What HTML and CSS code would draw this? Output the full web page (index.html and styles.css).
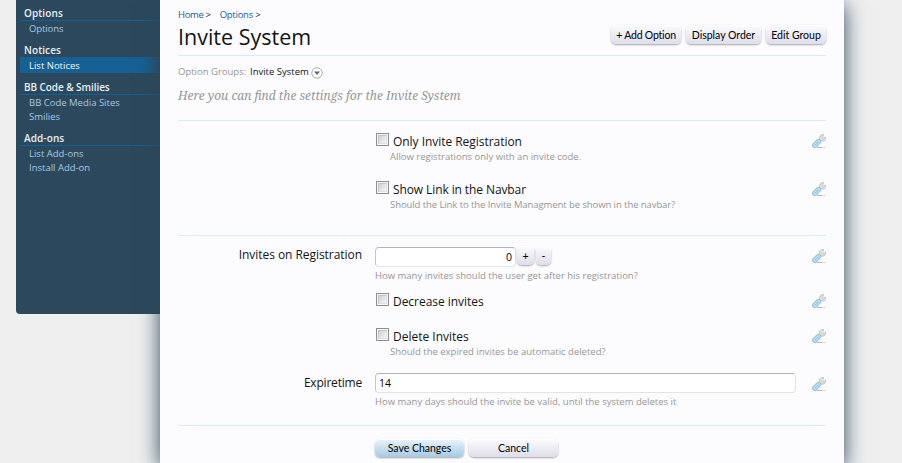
FILE: index.html
```html
<!DOCTYPE html>
<html lang="en">
<head>
<meta charset="utf-8">
<title>Invite System</title>
<link rel="stylesheet" href="styles.css">
</head>
<body>
<svg class="defs" width="0" height="0" aria-hidden="true">
  <defs>
    <symbol id="wrench" viewBox="0 0 14 14">
      <path d="M5 13h5v1H5z" fill="#bbb"/>
      <path d="M10 13h4v1h-4z" fill="#ddd"/>
      <path d="M7.500 6.500V3L9 1l2-.6L12 1l-1.500 2 1.300 1.200L13.600 3l.1 2.500L12 7H9L8 8z" fill="#dededf" stroke="#bcbcbf" stroke-width=".8"/>
      <path d="M2.800 11.200L6.500 7.600" stroke="#8fbdd6" stroke-width="5.400" stroke-linecap="round"/>
      <path d="M2.800 11.200L6.500 7.600" stroke="#b9dff1" stroke-width="3.600" stroke-linecap="round"/>
      <path d="M3 11.200L6.500 7.700" stroke="#86b8d2" stroke-width=".8"/>
    </symbol>
  </defs>
</svg>
<div class="page">
  <nav class="sidebar">
    <section class="group">
      <h2>Options</h2>
      <a class="t-opt">Options</a>
    </section>
    <section class="group">
      <h2>Notices</h2>
      <a class="active">List Notices</a>
    </section>
    <section class="group">
      <h2 class="t-bb">BB Code &amp; Smilies</h2>
      <a>BB Code Media Sites</a>
      <a>Smilies</a>
    </section>
    <section class="group">
      <h2>Add-ons</h2>
      <a>List Add-ons</a>
      <a>Install Add-on</a>
    </section>
  </nav>
  <main class="content">
    <div class="crumbs"><span><a>Home</a> &gt;</span><span><a>Options</a> &gt;</span></div>
    <header class="titlebar">
      <h1>Invite System</h1>
      <div class="actions">
        <button class="btn b-add">+ Add Option</button>
        <button class="btn b-order">Display Order</button>
        <button class="btn b-edit">Edit Group</button>
      </div>
    </header>
    <div class="groups"><span class="muted">Option Groups:</span><span class="current">Invite System</span>
      <svg width="12" height="12" viewBox="0 0 12 12"><circle cx="6" cy="6" r="5.200" fill="#fff" stroke="#aaa"/><path d="M3 4.500h6L6 8z" fill="#666"/></svg>
    </div>
    <p class="intro">Here you can find the settings for the Invite System</p>
    <form>
      <div class="row r-only">
        <div class="name"></div>
        <div class="field"><label class="check"><i></i><span class="l-only">Only Invite Registration</span></label><p class="hint indent h-only">Allow registrations only with an invite code.</p></div>
        <svg class="tool"><use href="#wrench"/></svg>
      </div>
      <div class="row r-show">
        <div class="name"></div>
        <div class="field"><label class="check"><i></i><span class="l-show">Show Link in the Navbar</span></label><p class="hint indent h-show">Should the Link to the Invite Managment be shown in the navbar?</p></div>
        <svg class="tool"><use href="#wrench"/></svg>
      </div>
      <div class="row r-count">
        <div class="name n-inv">Invites on Registration</div>
        <div class="field"><div class="spin"><div class="input number">0</div><button type="button" class="btn step">+</button><button type="button" class="btn step">-</button></div><p class="hint h-count">How many invites should the user get after his registration?</p></div>
        <svg class="tool"><use href="#wrench"/></svg>
      </div>
      <div class="row r-dec">
        <div class="name"></div>
        <div class="field"><label class="check"><i></i><span class="l-dec">Decrease invites</span></label></div>
        <svg class="tool"><use href="#wrench"/></svg>
      </div>
      <div class="row r-del">
        <div class="name"></div>
        <div class="field"><label class="check"><i></i><span class="l-del">Delete Invites</span></label><p class="hint indent h-del">Should the expired invites be automatic deleted?</p></div>
        <svg class="tool"><use href="#wrench"/></svg>
      </div>
      <div class="row r-exp">
        <div class="name n-exp">Expiretime</div>
        <div class="field"><div class="input">14</div><p class="hint h-exp">How many days should the invite be valid, until the system deletes it</p></div>
        <svg class="tool"><use href="#wrench"/></svg>
      </div>
      <div class="submit"><button type="button" class="btn primary">Save Changes</button><button type="button" class="btn">Cancel</button></div>
    </form>
  </main>
</div>
</body>
</html>
```

FILE: styles.css
```css
*, ::before { box-sizing: border-box; }
body { margin: 0; height: 463px; overflow: hidden; background: #efefef; font-family: "Open Sans", "Noto Sans", sans-serif; color: #141414; }
h1, h2, p { margin: 0; font-weight: normal; }
.defs { display: block; height: 0; }
.page { display: flex; align-items: flex-start; padding-left: 16px; white-space: nowrap; }
.sidebar { width: 144px; height: 314px; padding: 7px 0 0 4px; background: #2b485c; border-radius: 0 0 0 4px; }
.group { margin-bottom: 8px; }
.group h2 { height: 14px; padding-left: 4px; line-height: 13px; font-size: 10px; font-weight: 600; letter-spacing: .1px; color: #e6f1f8; border-bottom: 1px solid transparent; border-image: linear-gradient(90deg, #176093 88%, #1f5678) 1; }
.group h2.t-bb { letter-spacing: -.07px; }
.group a { display: block; height: 14px; padding-left: 9px; line-height: 13px; font-size: 9.5px; color: #a5cae4; }
.group h2 + a { height: 15px; line-height: 15px; }
.group a.t-opt { letter-spacing: -.1px; }
.group a.active { color: #f0f7fc; background: linear-gradient(90deg, #176093 88%, #255070); }
.content { width: 684px; height: 463px; padding: 9px 18px 0; background: #fcfcff; box-shadow: 0 5px 20px #2b485c; }
.crumbs { display: flex; gap: 9px; height: 12px; line-height: 12px; font-size: 9.5px; letter-spacing: -.35px; }
.crumbs span + span { letter-spacing: -.25px; }
.crumbs a { color: #176093; }
.titlebar { display: flex; justify-content: space-between; height: 35px; border-bottom: 1px solid #d7edfc; }
h1 { line-height: 31px; font-size: 21.5px; }
.actions { display: flex; gap: 5px; padding-top: 4px; }
.btn { height: 19px; padding: 0; border: 0; border-radius: 5px; background: linear-gradient(#fbfbff, #dedeec); box-shadow: 0 1px 2px rgba(0,0,0,.35), inset 0 1px 0 #fff; font: 10.5px/20px Lato, sans-serif; color: #000; }
.b-add { width: 70px; letter-spacing: -.2px; }
.b-order { width: 75px; }
.b-edit { width: 60px; }
.groups { display: flex; height: 32px; line-height: 32px; font-size: 9.5px; }
.groups .muted { width: 72px; color: #969696; }
.groups svg { margin: 11px 0 0 2px; }
.intro { height: 33px; font: italic 12px/16px "Noto Serif", "DejaVu Serif Condensed", "DejaVu Serif", serif; color: #969696; border-bottom: 1px solid #d7edfc; }
.row { display: grid; grid-template-columns: 197px 421px 1fr; padding-top: 12px; }
.r-only { height: 48px; }
.r-show { height: 67px; border-bottom: 1px solid #d7edfc; }
.r-count { height: 45px; padding-top: 11px; }
.r-dec { height: 35px; }
.r-del { height: 45px; }
.r-exp { height: 65px; border-bottom: 1px solid #d7edfc; }
.name { padding-right: 13px; text-align: right; font-size: 12px; line-height: 17px; }
.n-inv { line-height: 16px; letter-spacing: -.05px; }
.n-exp { line-height: 20px; letter-spacing: -.2px; }
.l-only, .l-dec { letter-spacing: -.04px; }
.l-show { letter-spacing: -.1px; }
.h-show { letter-spacing: -.08px; }
.tool { width: 14px; height: 14px; margin: 2px 0 0 auto; }
.r-only .tool, .r-show .tool, .r-dec .tool, .r-del .tool { margin-top: 1px; }
.r-exp .tool { margin-top: 4px; }
.check { display: flex; gap: 4px; height: 18px; padding-left: 1px; font-size: 12px; line-height: 18px; }
.check i { width: 13px; height: 13px; padding: 1px; border: 1px solid #8e8f8f; background: #f4f4f4; }
.check i::before { content: ""; display: block; width: 9px; height: 9px; border: 1px solid #c3c6cc; border-right-color: #dfe1e4; border-bottom-color: #dfe1e4; background: linear-gradient(135deg, #cdd0d7, #f6f6f6); }
.hint { font-size: 9.5px; line-height: 12px; color: #969696; }
.indent { padding-left: 15px; }
.input { height: 20px; padding: 0 3px; border: 1px solid #e3e3e3; border-top-color: #b5b5b5; border-left-color: #c5c5c5; border-radius: 4px; background: #fff; font-size: 10.5px; line-height: 18px; color: #000; }
.field > .input + .hint, .spin + .hint { margin-top: 3px; }
.spin { display: flex; }
.number { width: 141px; text-align: right; }
.step { width: 17px; margin: -1px 0 0 1px; }
.step + .step { margin-left: 2px; width: 15px; }
.submit { display: flex; gap: 5px; padding: 13px 0 0 197px; }
.submit .btn { width: 89px; height: 18px; line-height: 18px; }
.submit .primary { background: linear-gradient(#eaf5fc, #a5cae4); }
```
